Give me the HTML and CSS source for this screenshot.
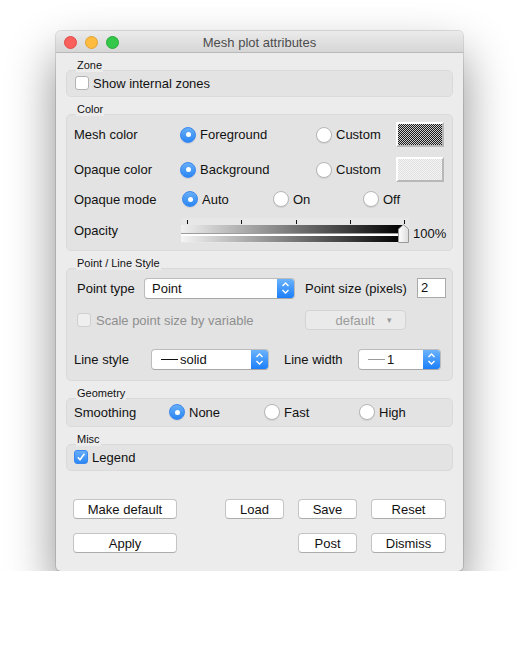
FILE: index.html
```html
<!DOCTYPE html>
<html lang="en">
<head>
    <meta charset="UTF-8">
    <meta name="viewport" content="width=device-width, initial-scale=1.0">
    <title>Mesh plot attributes</title>
    <link rel="stylesheet" href="styles.css">
</head>
<body>

    <div class="window">
        <div class="titlebar">
            <div class="lights">
                <span class="light red"></span>
                <span class="light yellow"></span>
                <span class="light green"></span>
            </div>
            <div class="title">Mesh plot attributes</div>
            <div></div>
        </div>

        <div class="content">
            <!-- Zone -->
            <div class="group">
                <div class="group-title">Zone</div>
                <div class="group-box short">
                    <div class="row zone-row">
                        <span class="checkbox"></span>
                        <span class="check-text">Show internal zones</span>
                    </div>
                </div>
            </div>

            <!-- Color -->
            <div class="group">
                <div class="group-title">Color</div>
                <div class="group-box color-box">
                    <div class="row swatch-row">
                        <span class="lbl w-mesh">Mesh color</span>
                        <span class="opt w-fg"><span class="radio on"></span>Foreground</span>
                        <span class="opt w-custom"><span class="radio"></span>Custom</span>
                        <span class="swatch dark"></span>
                    </div>
                    <div class="row swatch-row gap-10">
                        <span class="lbl w-mesh">Opaque color</span>
                        <span class="opt w-fg"><span class="radio on"></span>Background</span>
                        <span class="opt w-custom"><span class="radio"></span>Custom</span>
                        <span class="swatch light-pattern"></span>
                    </div>
                    <div class="row mode-row">
                        <span class="lbl w-mode">Opaque mode</span>
                        <span class="opt w-auto"><span class="radio on"></span>Auto</span>
                        <span class="opt w-on"><span class="radio"></span>On</span>
                        <span class="opt"><span class="radio"></span>Off</span>
                    </div>
                    <div class="row slider-row">
                        <span class="lbl w-opacity">Opacity</span>
                        <div class="slider">
                            <div class="ticks">
                                <span></span><span></span><span></span><span></span><span></span>
                            </div>
                            <div class="band top"></div>
                            <div class="band-line"></div>
                            <div class="band bottom"></div>
                            <svg class="handle" width="11" height="19" viewBox="0 0 11 19">
                                <defs>
                                    <linearGradient id="hg" x1="0" y1="0" x2="1" y2="0">
                                        <stop offset="0" stop-color="#ffffff"/>
                                        <stop offset="1" stop-color="#dcdcdc"/>
                                    </linearGradient>
                                </defs>
                                <path d="M0.5 5 L5.5 0.7 L10.5 5 L10.5 18.5 L0.5 18.5 Z" fill="url(#hg)" stroke="#9a9a9a" stroke-width="1"/>
                            </svg>
                        </div>
                        <span class="percent">100%</span>
                    </div>
                </div>
            </div>

            <!-- Point / Line Style -->
            <div class="group">
                <div class="group-title">Point / Line Style</div>
                <div class="group-box style-box">
                    <div class="row indent">
                        <span class="lbl w-ptype">Point type</span>
                        <div class="select w-point">
                            <span class="select-text">Point</span>
                            <span class="select-arrow">
                                <svg width="9" height="14" viewBox="0 0 9 14"><path d="M1.5 5 L4.5 2 L7.5 5 M1.5 9 L4.5 12 L7.5 9" fill="none" stroke="#fff" stroke-width="1.4"/></svg>
                            </span>
                        </div>
                        <span class="lbl w-psize">Point size (pixels)</span>
                        <span class="text-input">2</span>
                    </div>
                    <div class="row indent scale-row">
                        <span class="opt disabled w-scale"><span class="checkbox off"></span>Scale point size by variable</span>
                        <span class="pop-disabled">default <span class="caret">▾</span></span>
                    </div>
                    <div class="row line-row">
                        <span class="lbl w-lstyle">Line style</span>
                        <div class="select w-solid">
                            <span class="select-text"><span class="dash"></span>solid</span>
                            <span class="select-arrow">
                                <svg width="9" height="14" viewBox="0 0 9 14"><path d="M1.5 5 L4.5 2 L7.5 5 M1.5 9 L4.5 12 L7.5 9" fill="none" stroke="#fff" stroke-width="1.4"/></svg>
                            </span>
                        </div>
                        <span class="lbl w-lwidth">Line width</span>
                        <div class="select w-width">
                            <span class="select-text"><span class="dash gray"></span>1</span>
                            <span class="select-arrow">
                                <svg width="9" height="14" viewBox="0 0 9 14"><path d="M1.5 5 L4.5 2 L7.5 5 M1.5 9 L4.5 12 L7.5 9" fill="none" stroke="#fff" stroke-width="1.4"/></svg>
                            </span>
                        </div>
                    </div>
                </div>
            </div>

            <!-- Geometry -->
            <div class="group">
                <div class="group-title">Geometry</div>
                <div class="group-box geo-box">
                    <div class="row">
                        <span class="lbl w-smooth">Smoothing</span>
                        <span class="opt w-geo"><span class="radio on"></span>None</span>
                        <span class="opt w-geo"><span class="radio"></span>Fast</span>
                        <span class="opt"><span class="radio"></span>High</span>
                    </div>
                </div>
            </div>

            <!-- Misc -->
            <div class="group">
                <div class="group-title">Misc</div>
                <div class="group-box short">
                    <div class="row">
                        <span class="checkbox checked">
                            <svg width="10" height="10" viewBox="0 0 10 10"><path d="M1.8 5.2 L4 7.8 L8.4 1.8" fill="none" stroke="#fff" stroke-width="1.5"/></svg>
                        </span>
                        <span class="check-text">Legend</span>
                    </div>
                </div>
            </div>

            <div class="buttons">
                <div class="button-row">
                    <button class="btn w-wide">Make default</button>
                    <div class="button-group">
                        <button class="btn w-small">Load</button>
                        <button class="btn w-small">Save</button>
                        <button class="btn w-mid">Reset</button>
                    </div>
                </div>
                <div class="button-row">
                    <button class="btn w-wide">Apply</button>
                    <div class="button-group">
                        <button class="btn w-small">Post</button>
                        <button class="btn w-mid">Dismiss</button>
                    </div>
                </div>
            </div>
        </div>
    </div>

</body>
</html>
```

FILE: styles.css
```css
body {
    background-color: #ffffff;
    font-family: "Liberation Sans", Arial, sans-serif;
    font-size: 13px;
    color: #111;
    margin: 0;
    padding: 31px 0 0 56px;
}

.window {
    width: 407px;
    background: #ececec;
    border-radius: 5px;
    box-shadow: 0 0 0 1px rgba(0, 0, 0, 0.12), 0 24px 48px rgba(0, 0, 0, 0.45);
    overflow: hidden;
}

/* title bar */
.titlebar {
    height: 21px;
    display: grid;
    grid-template-columns: 1fr auto 1fr;
    align-items: center;
    background: linear-gradient(#ebebeb, #d6d6d6);
    border-bottom: 1px solid #b9b9b9;
}

.lights {
    display: flex;
    gap: 8px;
    padding-left: 8px;
    padding-top: 1px;
}

.light {
    width: 11px;
    height: 11px;
    border-radius: 50%;
}

.red { background: #fc605c; border: 0.5px solid #de4a46; }
.yellow { background: #fdbc40; border: 0.5px solid #dea236; }
.green { background: #34c84a; border: 0.5px solid #27aa35; }

.title {
    color: #4d4d4d;
    font-size: 13px;
    padding-top: 1px;
}

.content {
    padding: 6px 10px 18px 10px;
}

/* groups */
.group {
    margin-bottom: 6px;
}

.group-title {
    position: relative;
    display: block;
    width: fit-content;
    font-size: 11px;
    line-height: 13px;
    margin-left: 10px;
    margin-bottom: -2px;
    padding: 0 1px;
    background: #ececec;
    color: #111;
}

.group-box {
    background: #e3e3e3;
    border: 1px solid #dadada;
    border-radius: 5px;
    padding-left: 7px;
}

.group-box.short {
    padding-top: 2px;
    padding-bottom: 3px;
}

.color-box {
    padding-top: 7px;
    padding-bottom: 7px;
}

.style-box {
    padding-top: 9px;
    padding-bottom: 11px;
}

.geo-box {
    padding-top: 3px;
    padding-bottom: 4px;
}

.row {
    display: flex;
    align-items: center;
    height: 20px;
}

.zone-row {
    padding-left: 1px;
}

.swatch-row {
    height: 25px;
}

.gap-10 {
    margin-top: 10px;
}

.mode-row {
    margin-top: 7px;
}

.slider-row {
    height: 25px;
    margin-top: 9px;
}

.indent {
    padding-left: 3px;
}

.scale-row {
    margin-top: 12px;
}

.line-row {
    margin-top: 19px;
}

.lbl {
    flex-shrink: 0;
}

.opt {
    display: flex;
    align-items: center;
    flex-shrink: 0;
}

.w-mesh { width: 106px; }
.w-fg { width: 136px; }
.w-custom { width: 80px; }
.w-mode { width: 108px; }
.w-auto { width: 91px; }
.w-on { width: 90px; }
.w-opacity { width: 107px; }
.w-ptype { width: 67px; }
.w-psize { width: 112px; margin-left: 10px; }
.w-scale { width: 228px; }
.w-lstyle { width: 77px; }
.w-lwidth { width: 74px; margin-left: 15px; }
.w-smooth { width: 95px; }
.w-geo { width: 95px; }

/* radio buttons */
.radio {
    width: 14px;
    height: 14px;
    border-radius: 50%;
    background: #ffffff;
    border: 1px solid #b6b6b6;
    box-shadow: 0 1px 1px rgba(0, 0, 0, 0.08);
    margin-right: 4px;
    display: flex;
    align-items: center;
    justify-content: center;
}

.radio.on {
    background: linear-gradient(#67aef8, #2a86f4);
    border-color: #3a88ee;
}

.radio.on::after {
    content: "";
    width: 5px;
    height: 5px;
    border-radius: 50%;
    background: #ffffff;
}

/* checkboxes */
.checkbox {
    width: 12px;
    height: 12px;
    border: 1px solid #b3b3b3;
    border-radius: 3px;
    background: #ffffff;
    margin-right: 4px;
    display: flex;
    align-items: center;
    justify-content: center;
}

.checkbox.checked {
    background: linear-gradient(#66adf8, #2d88f5);
    border-color: #3a88ee;
}

.checkbox.off {
    background: #eeeeee;
    border-color: #cfcfcf;
    margin-right: 5px;
}

.disabled {
    color: #8f8f8f;
}

/* color swatches */
.swatch {
    width: 44px;
    height: 21px;
    border: 2px solid;
    border-color: #ffffff #b8b8b8 #b8b8b8 #ffffff;
    flex-shrink: 0;
}

.swatch.dark {
    background: repeating-conic-gradient(#1a1a1a 0 25%, #cccccc 0 50%) 0 0 / 2px 2px;
}

.swatch.light-pattern {
    background: repeating-conic-gradient(#e0e0e0 0 25%, #f4f4f4 0 50%) 0 0 / 2px 2px;
}

/* opacity slider */
.slider {
    position: relative;
    width: 228px;
    height: 25px;
    background: #e7e7e7;
    flex-shrink: 0;
}

.ticks {
    display: flex;
    justify-content: space-between;
    height: 7px;
    padding: 2px 4px 0 6px;
    box-sizing: border-box;
}

.ticks span {
    width: 1px;
    height: 4px;
    background: #111;
}

.band {
    width: 222px;
}

.band.top {
    height: 8px;
    background: linear-gradient(to right, #f0f0f0, #000000);
}

.band-line {
    width: 222px;
    height: 2px;
    background: #ffffff;
    border-top: 1px solid #9d9d9d;
}

.band.bottom {
    height: 6px;
    background: linear-gradient(to right, #f4f4f4, #000000);
}

.handle {
    position: absolute;
    left: 217px;
    top: 6px;
}

.percent {
    margin-left: 4px;
    padding-top: 6px;
}

/* popups */
.select {
    display: flex;
    height: 19px;
    background: #ffffff;
    border: 1px solid #bcbcbc;
    border-bottom-color: #a8a8a8;
    border-radius: 4px;
    overflow: hidden;
    flex-shrink: 0;
}

.w-point { width: 149px; }
.w-solid { width: 116px; }
.w-width { width: 81px; }

.select-text {
    flex: 1;
    display: flex;
    align-items: center;
    padding-left: 7px;
}

.select-arrow {
    width: 17px;
    background: linear-gradient(#6bb2fb, #1b7ffa);
    display: flex;
    align-items: center;
    justify-content: center;
}

.dash {
    width: 17px;
    height: 1px;
    background: #111;
    margin: 0 2px 0 2px;
}

.dash.gray {
    background: #9a9a9a;
}

.text-input {
    width: 24px;
    height: 18px;
    background: #ffffff;
    border: 1px solid #a9a9a9;
    padding-left: 3px;
    line-height: 18px;
}

.pop-disabled {
    width: 101px;
    height: 20px;
    box-sizing: border-box;
    border: 1px solid #d3d3d3;
    border-radius: 4px;
    background: #eaeaea;
    color: #9b9b9b;
    display: flex;
    align-items: center;
    justify-content: center;
    gap: 12px;
    padding-left: 16px;
}

.caret {
    font-size: 9px;
    color: #9b9b9b;
}

/* bottom buttons */
.buttons {
    margin-top: 28px;
    padding: 0 7px;
}

.button-row {
    display: flex;
    justify-content: space-between;
    margin-bottom: 14px;
}

.button-row:last-child {
    margin-bottom: 0;
}

.button-group {
    display: flex;
    gap: 14px;
}

.btn {
    height: 20px;
    background: #ffffff;
    border: 1px solid #c4c4c4;
    border-bottom-color: #acacac;
    border-radius: 4px;
    font-family: "Liberation Sans", Arial, sans-serif;
    font-size: 13px;
    color: #111;
    padding: 0;
}

.w-wide { width: 104px; }
.w-small { width: 59px; }
.w-mid { width: 75px; }
```
